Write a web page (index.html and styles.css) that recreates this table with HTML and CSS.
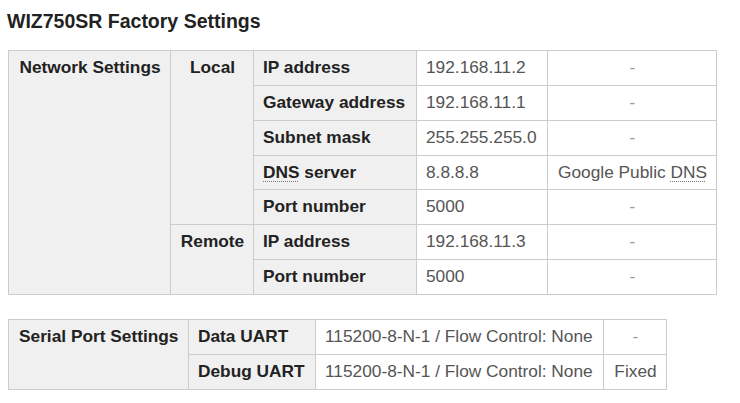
FILE: index.html
```html
<!DOCTYPE html>
<html>
<head>
<meta charset="utf-8">
<link rel="stylesheet" href="styles.css">
</head>
<body>
<div class="page">
  <h4 class="title">WIZ750SR Factory Settings</h4>
  <table class="tbl net">
    <colgroup>
      <col class="c1"><col class="c2"><col class="c3"><col class="c4"><col class="c5">
    </colgroup>
    <tr>
      <th rowspan="7" class="grp">Network Settings</th>
      <th rowspan="5" class="sub">Local</th>
      <th class="lbl">IP address</th>
      <td class="val">192.168.11.2</td>
      <td class="note dash">-</td>
    </tr>
    <tr>
      <th class="lbl">Gateway address</th>
      <td class="val">192.168.11.1</td>
      <td class="note dash">-</td>
    </tr>
    <tr>
      <th class="lbl">Subnet mask</th>
      <td class="val">255.255.255.0</td>
      <td class="note dash">-</td>
    </tr>
    <tr>
      <th class="lbl"><abbr>DNS</abbr> server</th>
      <td class="val">8.8.8.8</td>
      <td class="note">Google Public <abbr>DNS</abbr></td>
    </tr>
    <tr>
      <th class="lbl">Port number</th>
      <td class="val">5000</td>
      <td class="note dash">-</td>
    </tr>
    <tr>
      <th rowspan="2" class="sub">Remote</th>
      <th class="lbl">IP address</th>
      <td class="val">192.168.11.3</td>
      <td class="note dash">-</td>
    </tr>
    <tr>
      <th class="lbl">Port number</th>
      <td class="val">5000</td>
      <td class="note dash">-</td>
    </tr>
  </table>

  <table class="tbl serial">
    <colgroup>
      <col class="s1"><col class="s2"><col class="s3"><col class="s4">
    </colgroup>
    <tr>
      <th rowspan="2" class="grp">Serial Port Settings</th>
      <th class="lbl">Data UART</th>
      <td class="val">115200-8-N-1 / Flow Control: None</td>
      <td class="note dash">-</td>
    </tr>
    <tr>
      <th class="lbl">Debug UART</th>
      <td class="val">115200-8-N-1 / Flow Control: None</td>
      <td class="note">Fixed</td>
    </tr>
  </table>
</div>
</body>
</html>
```

FILE: styles.css
```css
html, body {
  margin: 0;
  padding: 0;
  background: #ffffff;
}

.page {
  padding: 10px 0 0 8px;
  font-family: "Liberation Sans", Arial, sans-serif;
  color: #222222;
}

.title {
  margin: 0 0 18px -1px;
  font-size: 19.5px;
  line-height: 22px;
  font-weight: bold;
  color: #222222;
}

.tbl {
  border-collapse: collapse;
  table-layout: fixed;
  font-size: 17.3px;
  line-height: 19.86px;
}

.tbl th,
.tbl td {
  border: 1px solid #cccccc;
  padding: 7px 8px 7px 9px;
  white-space: nowrap;
  overflow: hidden;
}

.tbl th {
  background: #f0f0f0;
  font-weight: bold;
  color: #222222;
}

.grp,
.sub {
  vertical-align: top;
  text-align: center;
}

.lbl {
  text-align: left;
}

.val {
  background: #ffffff;
  color: #555555;
  text-align: left;
}

.note {
  background: #ffffff;
  color: #555555;
  text-align: center;
}

.dash {
  color: #999999;
}

abbr {
  text-decoration: underline dotted;
  text-decoration-thickness: 1px;
  text-underline-offset: 3px;
  text-decoration-color: #777777;
}

.net {
  width: 708px;
}

.c1 { width: 162px; }
.c2 { width: 83px; }
.c3 { width: 163px; }
.c4 { width: 131px; }
.c5 { width: 169px; }

.serial {
  width: 658px;
  margin-top: 24px;
}

.serial .grp {
  text-align: left;
  padding-left: 10px;
}

.s1 { width: 180px; }
.s2 { width: 127px; }
.s3 { width: 288px; }
.s4 { width: 63px; }
```
